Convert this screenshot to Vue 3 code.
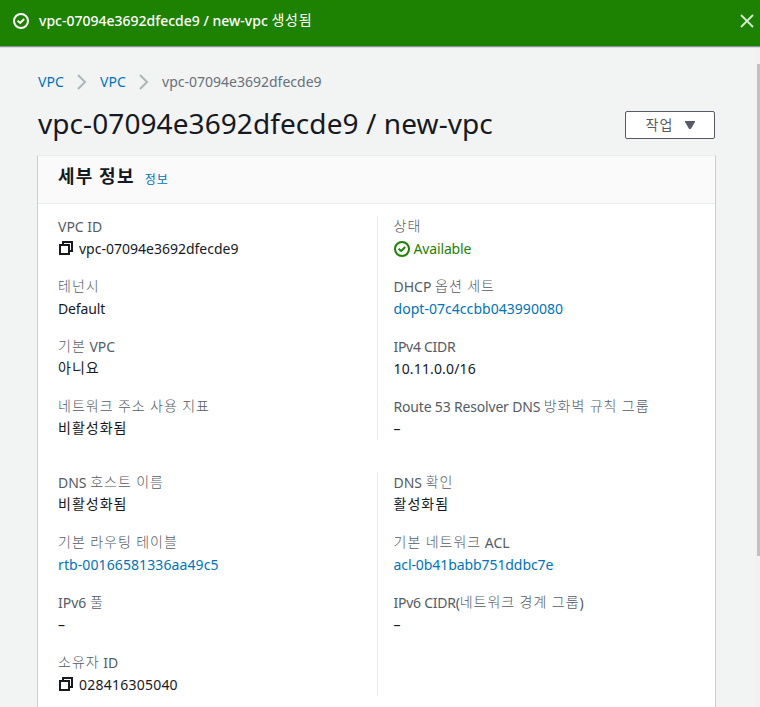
<script setup>
// Splits a string into Hangul and non-Hangul runs so each can be tracked separately.
const runs = (text) =>
  text.match(/[가-힣]+(?: [가-힣]+)*|[^가-힣]+/g).map((run) => ({ run, ko: /[가-힣]/.test(run) }))

const groups = [
  [
    [
      { label: 'VPC ID', value: 'vpc-07094e3692dfecde9', kind: 'copy' },
      { label: '테넌시', value: 'Default', track: -0.15 },
      { label: '기본 VPC', value: '아니요' },
      { label: '네트워크 주소 사용 지표', value: '비활성화됨' },
    ],
    [
      { label: '상태', value: 'Available', kind: 'status', track: -0.15 },
      { label: 'DHCP 옵션 세트', value: 'dopt-07c4ccbb043990080', kind: 'link', track: 0.04 },
      { label: 'IPv4 CIDR', value: '10.11.0.0/16', track: 0.15, labelTrack: -0.3 },
      { label: 'Route 53 Resolver DNS 방화벽 규칙 그룹', value: '–', labelTrack: -0.18 },
    ],
  ],
  [
    [
      { label: 'DNS 호스트 이름', value: '비활성화됨' },
      { label: '기본 라우팅 테이블', value: 'rtb-00166581336aa49c5', kind: 'link', track: 0.1 },
      { label: 'IPv6 풀', value: '–' },
      { label: '소유자 ID', value: '028416305040', kind: 'copy', track: 0.23 },
    ],
    [
      { label: 'DNS 확인', value: '활성화됨' },
      { label: '기본 네트워크 ACL', value: 'acl-0b41babb751ddbc7e', kind: 'link', track: -0.08 },
      { label: 'IPv6 CIDR(네트워크 경계 그룹)', value: '–', labelTrack: -0.25 },
    ],
  ],
]
</script>

<template>
  <div class="page">
    <header class="flash">
      <svg class="icon" viewBox="0 0 16 16"><circle cx="8" cy="8" r="7" /><path d="M4.6 7.8 7.2 10l4-4" /></svg>
      <p class="flash-text"><span v-for="(r, i) in runs('vpc-07094e3692dfecde9 / new-vpc 생성됨')" :key="i" :class="{ ko: r.ko }">{{ r.run }}</span></p>
      <svg class="close" viewBox="0 0 16 16"><path d="m2 2 12 12M14 2 2 14" /></svg>
    </header>
    <div class="body">
      <main class="content">
        <nav class="crumbs">
          <a class="link">VPC</a>
          <svg class="chev" viewBox="0 0 10 16"><path d="m1 1 7 7-7 7" /></svg>
          <a class="link">VPC</a>
          <svg class="chev" viewBox="0 0 10 16"><path d="m1 1 7 7-7 7" /></svg>
          <span class="current">vpc-07094e3692dfecde9</span>
        </nav>
        <div class="title-row">
          <h1>vpc-07094e3692dfecde9 / new-vpc</h1>
          <button class="action">
            <span class="ko">작업</span>
            <svg class="caret" viewBox="0 0 10 8"><path d="M0 0h10v1L5.8 8H4.2L0 1z" /></svg>
          </button>
        </div>
        <section class="card">
          <div class="card-head">
            <h2>세부 정보</h2>
            <a class="info">정보</a>
          </div>
          <div class="card-body">
            <div v-for="(g, gi) in groups" :key="gi" class="group">
              <div v-for="(col, ci) in g" :key="ci" class="col">
                <div v-for="f in col" :key="f.label" class="field">
                  <div class="label" :style="{ letterSpacing: (f.labelTrack || 0) + 'px' }"><span v-for="(r, i) in runs(f.label)" :key="i" :class="{ ko: r.ko }">{{ r.run }}</span></div>
                  <div class="value" :class="f.kind" :style="{ letterSpacing: (f.track || 0) + 'px' }">
                    <svg v-if="f.kind === 'copy'" class="icon" viewBox="0 0 16 16"><path d="M2 5h9v9H2zM5 5V2h9v9h-3" /></svg>
                    <svg v-if="f.kind === 'status'" class="icon" viewBox="0 0 16 16"><circle cx="8" cy="8" r="7" /><path d="M4.6 7.8 7.2 10l4-4" /></svg>
                    <div class="text"><span v-for="(r, i) in runs(f.value)" :key="i" :class="{ ko: r.ko }">{{ r.run }}</span></div>
                  </div>
                </div>
              </div>
            </div>
          </div>
        </section>
      </main>
      <div class="scroll"><div class="thumb"></div></div>
    </div>
  </div>
</template>

<style>
body { overflow: hidden; }
</style>

<style scoped>
.page {
  width: 760px;
  height: 707px;
  overflow: hidden;
  display: flex;
  flex-direction: column;
  background: #f2f3f3;
  color: #16191f;
  font: 14px/22px "Noto Sans", "Noto Sans CJK KR", sans-serif;
}
h1, h2, p { margin: 0; }
svg { fill: none; stroke: currentColor; flex: none; }
.ko {
  font-family: "Noto Sans CJK KR", sans-serif;
  font-weight: 300;
  line-height: 16px;
  letter-spacing: 1px;
  word-spacing: 0.3px;
  vertical-align: 1px;
}
.flash {
  box-sizing: border-box;
  height: 48px;
  flex: none;
  display: flex;
  align-items: flex-start;
  padding: 10px 5px 0 13px;
  background: #1d8102;
  color: #fff;
  border-bottom: 1px solid #d5dbdb;
  box-shadow: inset 0 -1px 0 #879596;
}
.flash .icon { margin: 3px 10px 0 0; }
.flash-text { flex: 1; font-weight: 500; white-space: pre; }
.flash-text .ko { font-weight: 400; letter-spacing: 0.8px; }
.icon { width: 16px; height: 16px; stroke-width: 2; }
.close { width: 16px; height: 16px; margin-top: 3px; stroke-width: 1.8; color: #d9ead5; }
.body { flex: 1; min-height: 0; display: flex; }
.content { box-sizing: border-box; width: 755px; flex: none; padding: 23px 39px 0 37px; }
.crumbs { display: flex; align-items: center; height: 22px; padding-left: 1px; }
.chev { width: 10px; height: 16px; margin: 0 13px; stroke: #aab7b8; stroke-width: 2; }
.crumbs .link { letter-spacing: 0.1px; }
.link { color: #0073bb; }
.current { color: #687078; }
.title-row { display: flex; justify-content: space-between; height: 62px; padding: 0 1px; }
h1 { margin-top: 12px; font-size: 28px; line-height: 36px; font-weight: 400; letter-spacing: 0.08px; white-space: nowrap; }
.action {
  box-sizing: border-box;
  width: 90px;
  height: 28px;
  margin-top: 18px;
  display: flex;
  align-items: center;
  justify-content: center;
  gap: 12px;
  padding: 0 0 0 1px;
  background: #fff;
  color: #545b64;
  border: 1px solid #545b64;
  border-radius: 2px;
  font-size: 14px;
}
.action .ko { font-weight: 400; padding-bottom: 2px; }
.caret { width: 10px; height: 8px; fill: currentColor; stroke: none; }
.card {
  box-sizing: border-box;
  width: 679px;
  height: 600px;
  background: #fff;
  border: 1px solid #c9cfd0;
  border-top-color: #eaeded;
}
.card-head {
  box-sizing: border-box;
  height: 48px;
  display: flex;
  align-items: baseline;
  padding: 6px 20px 0;
  background: #fafafa;
  border-bottom: 1px solid #eaeded;
  font-family: "Noto Sans CJK KR", sans-serif;
}
h2 { font-size: 18px; font-weight: 700; line-height: 26px; letter-spacing: 1.3px; }
.info { margin-left: 10px; padding-top: 1px; transform: translateY(1px); color: #0073bb; font-size: 12px; letter-spacing: 0.9px; }
.card-body { display: flex; flex-direction: column; gap: 32px; padding: 12px 20px 0; }
.group { display: grid; grid-template-columns: 319px 1fr; height: 224px; }
.col { display: flex; flex-direction: column; gap: 16px; }
.col + .col { border-left: 1px solid #eaeded; padding-left: 15.5px; }
.label, .value { height: 22px; white-space: pre; }
.label { color: #545b64; }
.value { display: flex; }
.value .ko { font-weight: 400; }
.value.link { color: #0073bb; }
.value.status { color: #1d8102; }
.value.status .icon { margin: 3px 4px 0 0; }
.value.copy .icon { margin: 2px 5px 0 0; }
.scroll { box-sizing: border-box; width: 5px; flex: none; padding: 16px 0 0 2px; background: #f1f1f1; }
.thumb { height: 492px; background: #c1c1c1; }
</style>
